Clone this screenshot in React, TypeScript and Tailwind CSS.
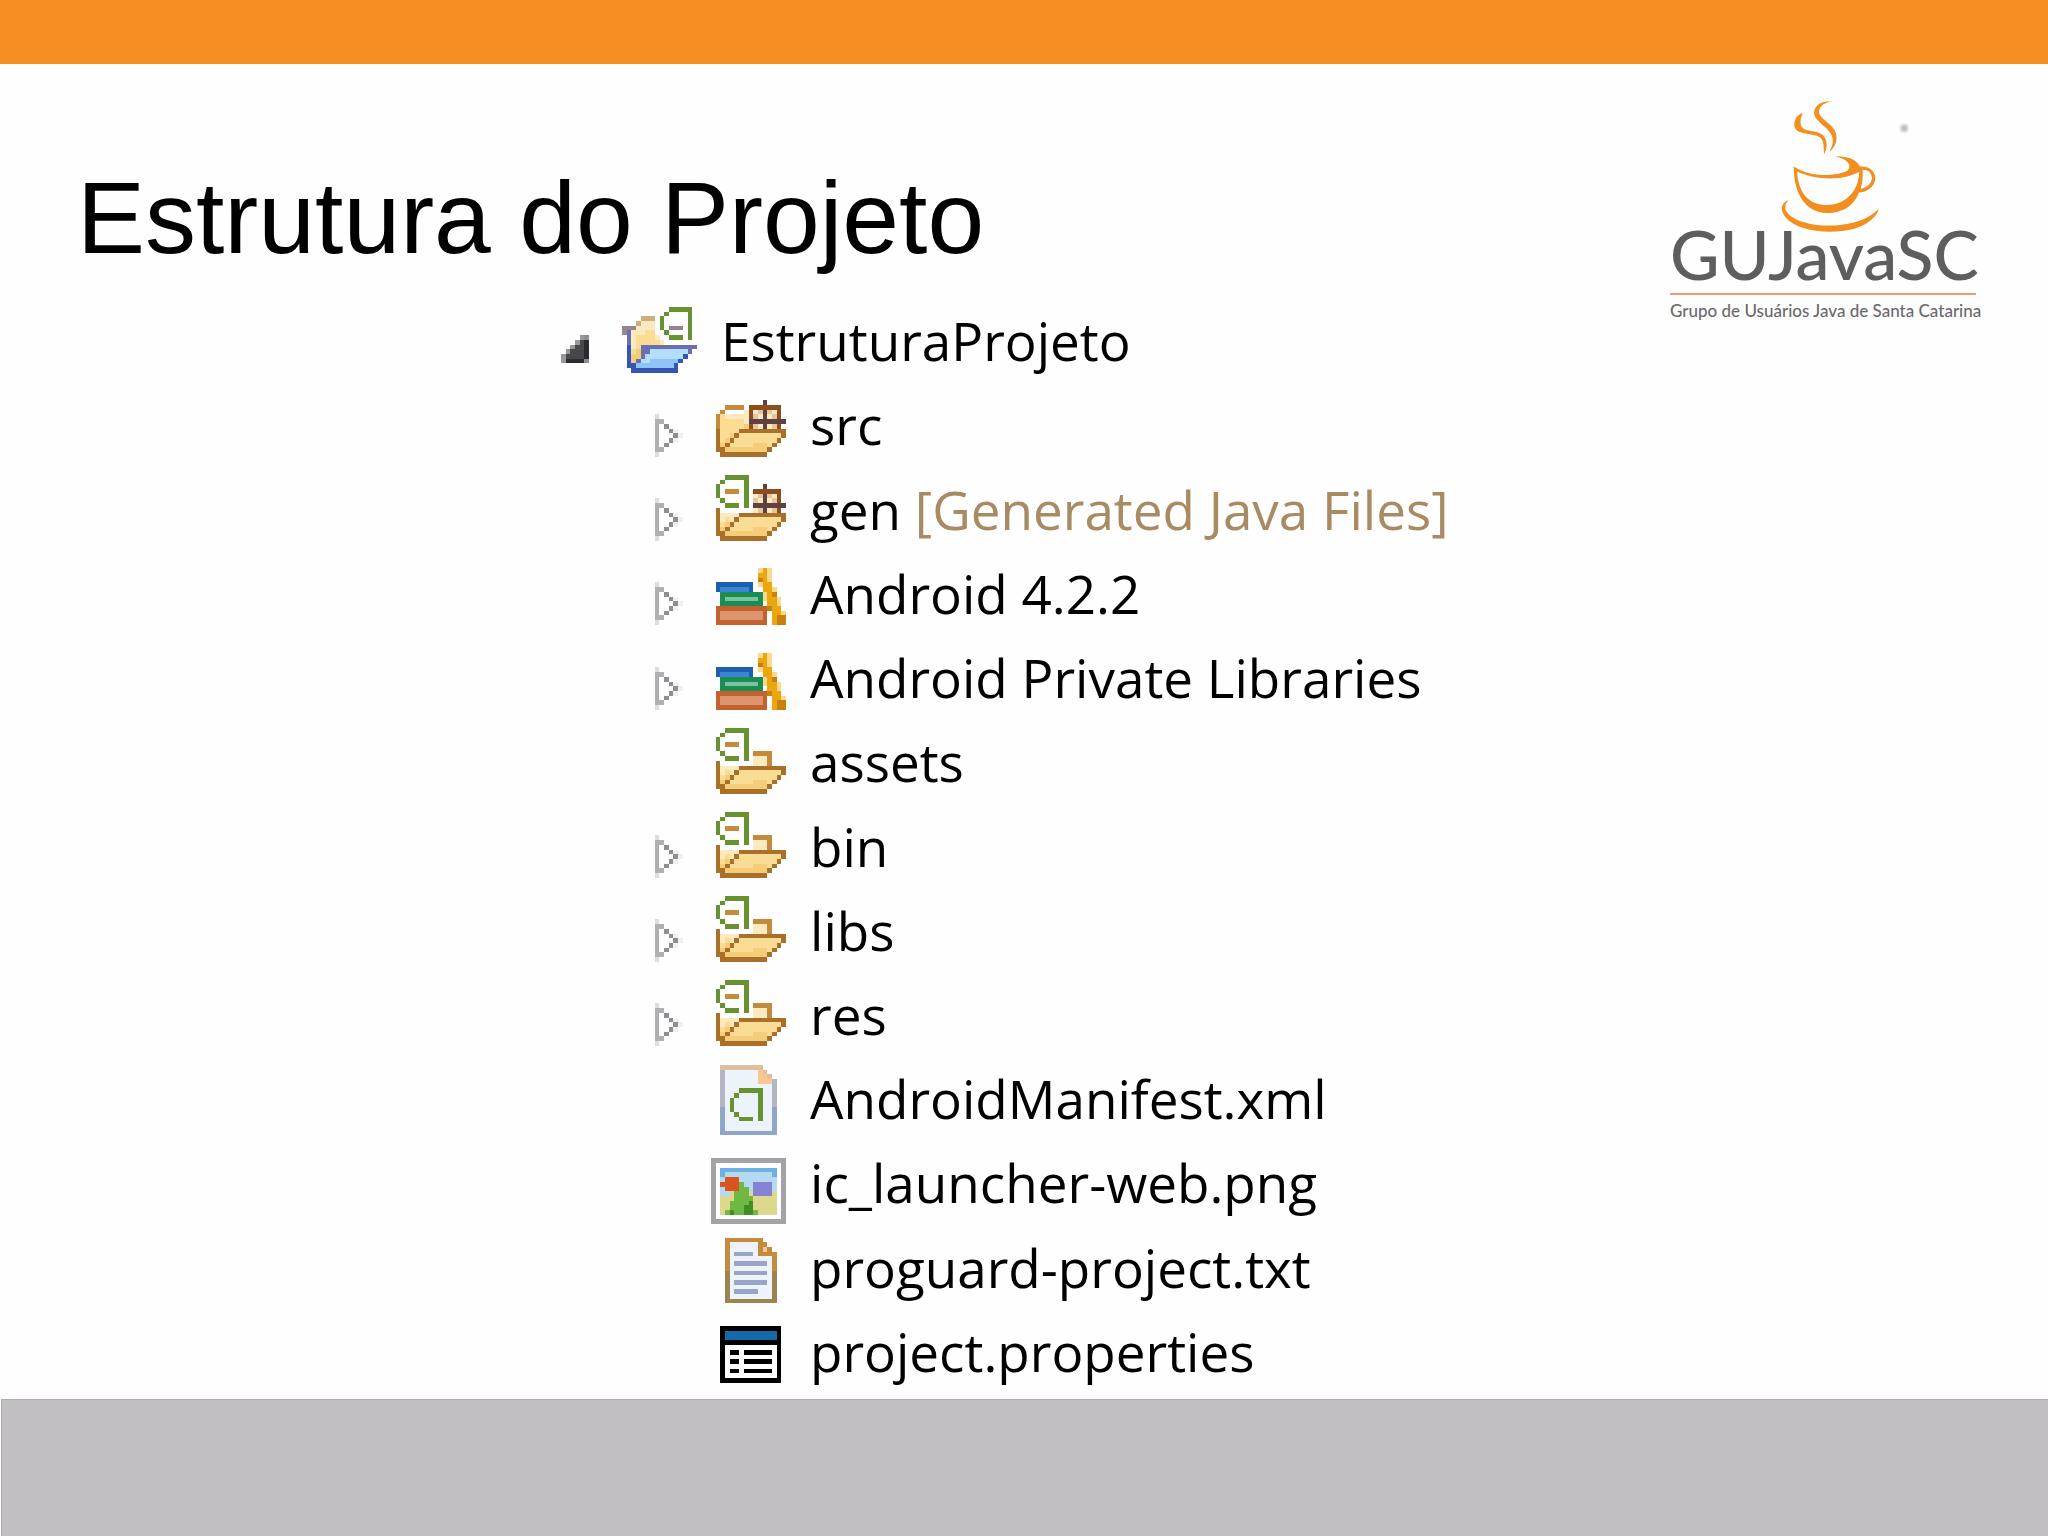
type Palette = Record<string, string>;

interface PixelArtProps {
    rows: string[];
    columns?: number;
    className: string;
}

interface TreeItem {
    name: string;
    note?: string;
    icon: string[];
    expandable?: boolean;
}

const palette: Palette = {
    // android badge and folders
    g: "#68912f",
    b: "#a9702a",
    o: "#c58a3c",
    c: "#fbe9c0",
    y: "#fbdc94",
    d: "#f5cd78",
    k: "#8a4f1c",
    K: "#5f4144",
    n: "#e8c3a0",
    w: "#ffffff",
    // open project folder
    m: "#94858f",
    p: "#6a6fb0",
    B: "#3454b8",
    l: "#b4dcfb",
    L: "#8fc4f7",
    t: "#cfae78",
    // books
    u: "#1b5fae",
    U: "#3a86d0",
    e: "#1b8c54",
    E: "#79c49a",
    r: "#c4622f",
    R: "#dc966e",
    f: "#fbd98a",
    F: "#eba70f",
    q: "#c9800c",
    // files
    h: "#dcc0a0",
    H: "#f9c890",
    s: "#b3b5c4",
    S: "#8ea6c8",
    i: "#edf3fb",
    a: "#a3a2a7",
    z: "#6fb0e4",
    Z: "#b5d9f0",
    x: "#d9541e",
    v: "#8482d2",
    G: "#6fb843",
    j: "#3f8f22",
    Y: "#ddd98c",
    T: "#9c8450",
    N: "#9aa4c8",
    "#": "#000000",
    P: "#1469a8",
    // arrows
    A: "#b0afb3",
    C: "#8f8e92",
    D: "#dddddf",
    W: "#f0f0f1",
    M: "#48484c",
    Q: "#2b2b2f",
    O: "#98989b",
};

const arrowOpen = [
    "", "", "", "", "", "",
    "....OC",
    "...OMQ",
    "..OMMQ",
    ".OMMMQ",
    "OMMMMQ",
    "OQQQQC",
];

const arrowClosed = [
    "", "", "", "", "",
    ".D",
    ".AA",
    ".A.C",
    ".A..CW",
    ".A...CW",
    ".A..CW",
    ".A.C",
    ".AA",
    ".D",
];

const projectIcon = [
    "..........ggggg.",
    ".........g....g.",
    "....ttt.g.....g.",
    "...tccc.g.....g.",
    "mmmcccc.g.mmm.g.",
    "mpcccyy..g....g.",
    ".pcyyyyc..ggg.g.",
    ".pcyyyyyc.......",
    ".Bcypppppppppppp",
    ".Bydppllllllllp.",
    ".BddpllllllllB..",
    ".BdpllLLLLLLB...",
    ".BBLLLLLLLLB....",
    "..BBBBBBBBBB....",
];

const srcIcon = [
    "",
    "",
    "...........K....",
    "...oooo.kkkkkkk.",
    "..owwwwckcnKnck.",
    ".oyccccckncKcnk.",
    ".oyyyyycKKKKKKKK",
    ".oyyyyydkncKcnk.",
    ".byyyybbbbbbbbbb",
    ".byydbyyyyyyyyyb",
    ".bydbyyyyyyyyyb.",
    ".bdbyyyyydddyb..",
    ".bbdddddddddb...",
    "..bbbbbbbbbb....",
];

const genIcon = [
    "...ggggg........",
    "..g....g........",
    ".g.....g...K....",
    ".g.ooo.g.kkkkkk.",
    ".g.....g.cnKnck.",
    "..g....g.ncKcnk.",
    "...ggg.g.KKKKKKK",
    ".b.......cnKcnk.",
    ".bccccbbbbbbbbbb",
    ".bcycbyyyyyyyyyb",
    ".bydbyyyyyyyyyb.",
    ".bdbyyyyydddyb..",
    ".bbdddddddddb...",
    "..bbbbbbbbbb....",
];

const folderIcon = [
    "...ggggg........",
    "..g....g........",
    ".g.....g........",
    ".g.ooo.g........",
    ".g.....g........",
    "..g....g.oooo...",
    "...ggg.g.ccco...",
    ".b.......ccco...",
    ".bccccbbbbbbbbbb",
    ".bcycbyyyyyyyyyb",
    ".bydbyyyyyyyyyb.",
    ".bdbyyyyydddyb..",
    ".bbdddddddddb...",
    "..bbbbbbbbbb....",
];

const booksIcon = [
    "",
    "",
    "..........fFf...",
    "..........FFf...",
    "..........qFf...",
    ".uuuuuuuu.fFF...",
    ".uUUUUUUu..FFf..",
    "..eeeeeeeeefFq..",
    "..eEEEEEEEefFFf.",
    "..eeeeeeeee.FFf.",
    ".rrrrrrrrrrrqFF.",
    ".rRRRRRRRRRr.FFf",
    ".rRRRRRRRRRr.Fqq",
    ".rrrrrrrrrrr.Fqq",
];

const manifestIcon = [
    "..hhhhhhhhh.....",
    "..siiiiiiiHh....",
    "..siiiiiiiHHh...",
    "..siiiiiiiHHHs..",
    "..siiiiiiiiiis..",
    "..siiigggggiis..",
    "..siigiiiigiis..",
    "..sigiiiiigiis..",
    "..sigiiiiigiis..",
    "..SigiiiiigiiS..",
    "..SiigiiiigiiS..",
    "..SiiigggigiiS..",
    "..SiiiiiiiiiiS..",
    "..SiiiiiiiiiiS..",
    "..SSSSSSSSSSSS..",
];

const imageIcon = [
    "",
    "",
    "aaaaaaaaaaaaaaaa",
    "awwwwwwwwwwwwwwa",
    "awzzzzzzzzzzzzwa",
    "awzZZZZZZZZZZzwa",
    "awZxxxZZZZZZZZwa",
    "awxxxxGZZvvvvZwa",
    "awZxxxGGZvvvvZwa",
    "awZZYGGGYvvvvYwa",
    "awYYYGGGGYYYYYwa",
    "awYYGGGGjYYYYYwa",
    "awYYGGGjjYYYYYwa",
    "awYGjGGjjGYYYYwa",
    "awwwwwwwwwwwwwwa",
    "aaaaaaaaaaaaaaaa",
];

const textIcon = [
    "",
    "...oooooooo.....",
    "...oiiiiiioo....",
    "...oiiiiiioHo...",
    "...oiNNNNioooo..",
    "...oiiiiiiiiio..",
    "...oiNNNNNNNio..",
    "...oiiiiiiiiio..",
    "...TiNNNNNNNiT..",
    "...TiiiiiiiiiT..",
    "...TiNNNNNNNiT..",
    "...TiiiiiiiiiT..",
    "...TiNNNNNiiiT..",
    "...TiiiiiiiiiT..",
    "...TTTTTTTTTTT..",
];

const propertiesIcon = [
    "",
    "",
    "..#############.",
    "..#PPPPPPPPPPP#.",
    "..#PPPPPPPPPPP#.",
    "..#############.",
    "..#wwwwwwwwwww#.",
    "..#w##w######w#.",
    "..#wwwwwwwwwww#.",
    "..#w##w######w#.",
    "..#wwwwwwwwwww#.",
    "..#w##w######w#.",
    "..#wwwwwwwwwww#.",
    "..#############.",
];

const items: TreeItem[] = [
    { name: "src", icon: srcIcon, expandable: true },
    { name: "gen", note: "[Generated Java Files]", icon: genIcon, expandable: true },
    { name: "Android 4.2.2", icon: booksIcon, expandable: true },
    { name: "Android Private Libraries", icon: booksIcon, expandable: true },
    { name: "assets", icon: folderIcon },
    { name: "bin", icon: folderIcon, expandable: true },
    { name: "libs", icon: folderIcon, expandable: true },
    { name: "res", icon: folderIcon, expandable: true },
    { name: "AndroidManifest.xml", icon: manifestIcon },
    { name: "ic_launcher-web.png", icon: imageIcon },
    { name: "proguard-project.txt", icon: textIcon },
    { name: "project.properties", icon: propertiesIcon },
];

const PixelArt = ({ rows, columns = 16, className }: PixelArtProps) => (
    <svg
        viewBox={`0 0 ${columns} 16`}
        shapeRendering="crispEdges"
        className={className}
        aria-hidden="true"
    >
        {rows.flatMap((row, y) =>
            row.split("").map((key, x) =>
                palette[key] ? (
                    <rect key={`${x}-${y}`} x={x} y={y} width="1" height="1" fill={palette[key]} />
                ) : null
            )
        )}
    </svg>
);

const Arrow = ({ rows, label }: { rows: string[]; label: string }) => (
    <button type="button" aria-label={label} className="block w-[61px] shrink-0">
        <PixelArt rows={rows} columns={13} className="block h-[75px] w-[61px]" />
    </button>
);

const Logo = () => (
    <div className="flex w-[306px] shrink-0 flex-col">
        <svg viewBox="420 60 390 400" className="ml-[110px] h-[133px] w-[130px]" aria-hidden="true">
            <defs>
                <filter id="soft">
                    <feGaussianBlur stdDeviation="4" />
                </filter>
            </defs>
            <g fill="#f28f1f">
                <path d="M577 64C545 62 523 76 522 98C522 124 570 143 577 172C581 190 574 203 568 216C584 203 592 185 589 166C584 132 540 121 537 97C536 80 552 68 577 64Z" />
                <path d="M488 99C468 104 459 126 464 143C473 166 519 159 539 172C554 183 550 205 552 223C563 204 563 180 549 166C530 149 492 158 484 140C479 126 482 111 488 99Z" />
                <path d="M461 260C510 293 584 291 622 273C636 259 628 239 585 229C633 228 653 245 660 260C691 258 709 278 706 299C702 323 681 337 657 338C643 375 611 400 562 400C493 399 460 337 461 260ZM471 275C474 336 503 376 562 376C616 374 655 338 658 276C613 302 531 303 471 275ZM668 270C669 290 668 309 662 327C683 323 694 311 696 296C696 280 685 270 668 270Z" />
                <path d="M446 361C432 375 432 389 444 402C493 452 659 452 716 387C714 408 684 435 643 447C569 466 474 455 438 415C418 392 421 371 446 361Z" />
            </g>
            <circle cx="793" cy="145" r="11" fill="#b9b9bd" filter="url(#soft)" />
        </svg>
        <p className="-mt-[19px] font-['Lato',sans-serif] text-[68px] leading-[80px] font-medium text-[#5f5d60]">
            GUJavaSC
        </p>
        <div className="-mt-px h-[2px] bg-[#f29a76]" />
        <p className="pt-1 font-['Lato',sans-serif] text-[17px] leading-[24px] font-medium whitespace-nowrap text-[#6b696c]">
            Grupo de Usuários Java de Santa Catarina
        </p>
    </div>
);

const App = () => {
    return (
        <div className="flex min-h-screen flex-col bg-[#fefefe]">
            <div className="h-[64px] bg-[#f48e22]" />

            <header className="flex h-[238px] items-start justify-between pr-[72px] pl-[77px]">
                <h1 className="pt-[96px] font-['Liberation_Sans',Arial,sans-serif] text-[102px] leading-[116px] whitespace-nowrap text-black">
                    Estrutura do Projeto
                </h1>
                <div className="pt-[36px]">
                    <Logo />
                </div>
            </header>

            {/* Project tree */}
            <main className="flex flex-1 flex-col pb-[2px] pl-[561px] font-['Open_Sans','Noto_Sans',sans-serif] text-[53px] leading-[72px] whitespace-nowrap text-black">
                <div className="flex flex-1 items-center">
                    <Arrow rows={arrowOpen} label="Collapse EstruturaProjeto" />
                    <PixelArt rows={projectIcon} className="h-[75px] w-[75px] shrink-0" />
                    <span className="pb-1.5 pl-6">EstruturaProjeto</span>
                </div>
                <ul className="flex flex-[12] flex-col pl-[89px]">
                    {items.map((item) => (
                        <li key={item.name} className="flex flex-1 items-center">
                            {item.expandable ? (
                                <Arrow rows={arrowClosed} label={`Expand ${item.name}`} />
                            ) : (
                                <div className="w-[61px] shrink-0" />
                            )}
                            <PixelArt rows={item.icon} className="h-[75px] w-[75px] shrink-0" />
                            <span className="pb-1.5 pl-6">
                                {item.name}
                                {item.note && <span className="text-[#a98b63]"> {item.note}</span>}
                            </span>
                        </li>
                    ))}
                </ul>
            </main>

            <footer className="ml-px h-[137px] border-t border-l border-[#b0aeb1] bg-[#c1bfc2]" />
        </div>
    );
};

export default App;
